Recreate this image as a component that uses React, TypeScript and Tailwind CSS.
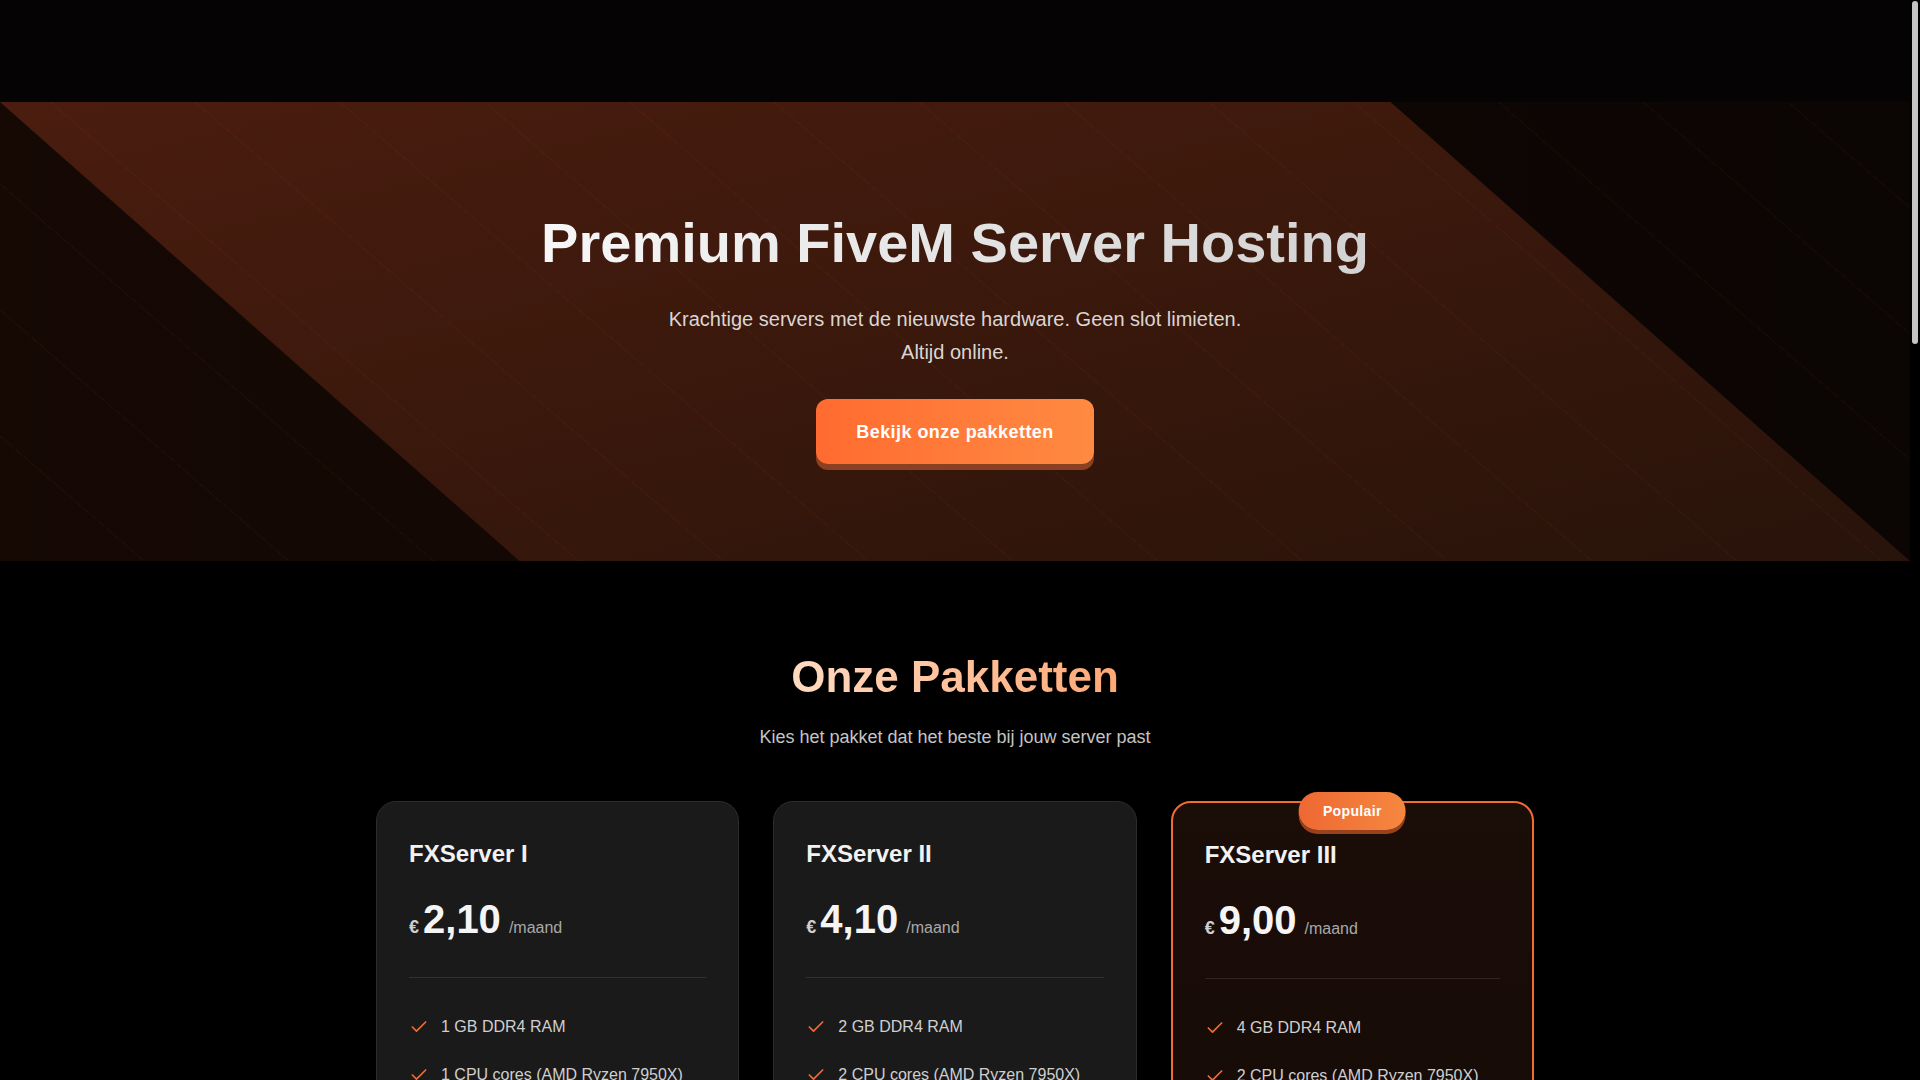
import React from 'react';
import { Check, Zap, Shield, Headphones, Cpu, HardDrive, Globe } from 'lucide-react';

type Pkg = {
  name: string;
  price: string;
  popular?: boolean;
  features: string[];
};

const packages: Pkg[] = [
  {
    name: 'FXServer I',
    price: '2,10',
    features: [
      '1 GB DDR4 RAM',
      '1 CPU cores (AMD Ryzen 7950X)',
      '10 GB NVMe SSD',
      'Geen slot limieten',
      'DDoS bescherming',
      'txAdmin inbegrepen',
      '24/7 support',
    ],
  },
  {
    name: 'FXServer II',
    price: '4,10',
    features: [
      '2 GB DDR4 RAM',
      '2 CPU cores (AMD Ryzen 7950X)',
      '25 GB NVMe SSD',
      'Geen slot limieten',
      'DDoS bescherming',
      'txAdmin inbegrepen',
      '24/7 support',
    ],
  },
  {
    name: 'FXServer III',
    price: '9,00',
    popular: true,
    features: [
      '4 GB DDR4 RAM',
      '2 CPU cores (AMD Ryzen 7950X)',
      '50 GB NVMe SSD',
      'Geen slot limieten',
      'DDoS bescherming',
      'txAdmin inbegrepen',
      '24/7 support',
    ],
  },
];

const reasons = [
  { icon: Zap, title: 'Razendsnel', text: 'De nieuwste AMD Ryzen processors voor de beste prestaties.' },
  { icon: Shield, title: 'DDoS bescherming', text: 'Je server blijft online, ook tijdens zware aanvallen.' },
  { icon: HardDrive, title: 'NVMe opslag', text: 'Snelle opslag voor korte laadtijden van je resources.' },
  { icon: Headphones, title: '24/7 support', text: 'Ons team staat dag en nacht voor je klaar.' },
];

const faqs = [
  { q: 'Hoe snel is mijn server online?', a: 'Direct na betaling wordt je server automatisch aangemaakt en is hij binnen enkele minuten bereikbaar.' },
  { q: 'Kan ik later upgraden?', a: 'Ja, je kunt op elk moment overstappen naar een groter pakket zonder dataverlies.' },
  { q: 'Zijn er slot limieten?', a: 'Nee, al onze pakketten hebben geen slot limieten. Je betaalt alleen voor de hardware.' },
  { q: 'Welke betaalmethoden accepteren jullie?', a: 'iDEAL, Bancontact, PayPal en creditcard.' },
];

const PackageCard: React.FC<{ pkg: Pkg }> = ({ pkg }) => {
  const popular = !!pkg.popular;
  return (
    <div
      className={`relative flex flex-col rounded-[20px] px-8 pt-9 pb-8 ${
        popular
          ? 'border-2 border-[#f26b33] bg-gradient-to-b from-[#1b0d08] to-[#130a07]'
          : 'border border-[#2c2c2c] bg-[#1a1a1a]'
      }`}
    >
      {popular && (
        <span className="absolute -top-[11px] left-1/2 -translate-x-1/2 rounded-full bg-gradient-to-r from-[#ee6833] to-[#f5873f] px-6 py-[9px] text-sm leading-5 font-bold tracking-wide text-white shadow-[0_4px_0_#99401d]">
          Populair
        </span>
      )}
      <h3 className="text-2xl leading-8 font-bold text-[#f2f2f2]">{pkg.name}</h3>
      <div className="mt-[29px] flex items-baseline leading-none">
        <span className="mr-1 text-lg font-bold text-[#cfcfcf]">€</span>
        <span className="text-[40px] font-bold text-[#f5f5f5]">{pkg.price}</span>
        <span className="ml-2 text-base text-[#a9a9a9]">/maand</span>
      </div>
      <div className="mt-[36px] h-px bg-white/10" />
      <ul className="mt-[37px] flex flex-col gap-6">
        {pkg.features.map((f) => (
          <li key={f} className="flex items-center gap-3 text-base leading-6 text-[#cfcfcf]">
            <Check size={20} strokeWidth={2} className="shrink-0 text-[#f26b33]" />
            {f}
          </li>
        ))}
      </ul>
      <button
        className={`mt-10 h-[52px] rounded-xl text-base font-bold tracking-wide ${
          popular
            ? 'bg-gradient-to-r from-[#ff6b30] to-[#ff8a42] text-white shadow-[0_5px_0_#8e3f20]'
            : 'border border-[#3a3a3a] bg-[#222] text-[#e5e5e5]'
        }`}
      >
        Bestel nu
      </button>
    </div>
  );
};

export default function App() {
  return (
    <div className="bg-black pr-[10px] font-['Liberation_Sans',Arial,sans-serif] text-white">
      {/* page scrollbar */}
      <div className="fixed top-0 right-0 z-50 h-screen w-[10px] bg-black">
        <div className="mt-px ml-[2px] h-[343px] w-[6px] rounded-full bg-[#c4c4c4]" />
      </div>

      {/* Header (empty bar) */}
      <header className="h-[102px] bg-[#050303]" />

      {/* Hero */}
      <section className="relative h-[459px] overflow-hidden bg-gradient-to-r from-[#160904] to-[#0b0503]">
        <div className="pointer-events-none absolute inset-0 bg-gradient-to-br from-[#4a1d0f] via-[#3a180c] to-[#28130a] [clip-path:polygon(0_0,72.8%_0,100%_100%,27.2%_100%)]" />
        <div className="pointer-events-none absolute inset-0 bg-[image:repeating-linear-gradient(41deg,transparent_0,transparent_94px,rgba(255,120,60,0.045)_94px,rgba(255,120,60,0.045)_95px)]" />
        <div className="relative flex flex-col items-center pt-[107px] text-center">
          <h1 className="bg-gradient-to-r from-[#f7f7f7] to-[#d2d2d2] bg-clip-text text-[56px] leading-[1.2] font-bold text-transparent">
            Premium FiveM Server Hosting
          </h1>
          <p className="mt-[27px] max-w-[600px] text-xl leading-relaxed text-[#dbd6d2]">
            Krachtige servers met de nieuwste hardware. Geen slot limieten. Altijd online.
          </p>
          <button className="mt-[31px] flex h-[65px] items-center rounded-xl bg-gradient-to-r from-[#ff6b30] to-[#ff8a42] px-10 text-lg font-bold tracking-wide text-white shadow-[0_6px_0_#8b4022]">
            Bekijk onze pakketten
          </button>
        </div>
      </section>

      {/* Packages */}
      <section className="flex flex-col items-center bg-black pt-[90px] pb-24">
        <h2 className="bg-gradient-to-r from-[#ffdac0] to-[#ffa874] bg-clip-text text-[44px] leading-[1.2] font-bold text-transparent">
          Onze Pakketten
        </h2>
        <p className="mt-[19px] text-lg leading-7 text-[#c4c4c4]">Kies het pakket dat het beste bij jouw server past</p>
        <div className="mt-[50px] grid w-[1158px] grid-cols-3 items-start gap-[34px]">
          {packages.map((p) => (
            <PackageCard key={p.name} pkg={p} />
          ))}
        </div>
      </section>

      {/* Why us */}
      <section className="flex flex-col items-center bg-[#0a0a0a] py-24">
        <h2 className="text-[40px] leading-[1.2] font-bold text-[#f2f2f2]">Waarom kiezen voor ons?</h2>
        <p className="mt-4 text-lg text-[#bfbfbf]">Alles wat je nodig hebt voor een succesvolle FiveM server</p>
        <div className="mt-14 grid w-[1158px] grid-cols-4 gap-6">
          {reasons.map(({ icon: Icon, title, text }) => (
            <div key={title} className="rounded-[20px] border border-[#2c2c2c] bg-[#161616] p-8">
              <div className="flex h-12 w-12 items-center justify-center rounded-xl bg-[#f26b33]/15 text-[#f26b33]">
                <Icon size={24} />
              </div>
              <h3 className="mt-6 text-xl font-bold text-[#f2f2f2]">{title}</h3>
              <p className="mt-3 text-base leading-relaxed text-[#a9a9a9]">{text}</p>
            </div>
          ))}
        </div>
        <div className="mt-16 flex w-[1158px] items-center justify-between rounded-[20px] border border-[#2c2c2c] bg-[#141414] px-12 py-10">
          <div className="flex items-center gap-5">
            <Cpu size={40} className="text-[#f26b33]" />
            <div>
              <div className="text-2xl font-bold text-[#f2f2f2]">AMD Ryzen 9 7950X</div>
              <div className="mt-1 text-base text-[#a9a9a9]">Tot 5,7 GHz boost clock op elke server</div>
            </div>
          </div>
          <div className="flex items-center gap-5">
            <Globe size={40} className="text-[#f26b33]" />
            <div>
              <div className="text-2xl font-bold text-[#f2f2f2]">Datacenter in Nederland</div>
              <div className="mt-1 text-base text-[#a9a9a9]">Lage ping voor spelers in de Benelux</div>
            </div>
          </div>
        </div>
      </section>

      {/* FAQ */}
      <section className="flex flex-col items-center bg-black py-24">
        <h2 className="text-[40px] leading-[1.2] font-bold text-[#f2f2f2]">Veelgestelde vragen</h2>
        <div className="mt-14 flex w-[800px] flex-col gap-4">
          {faqs.map((f) => (
            <div key={f.q} className="rounded-2xl border border-[#2c2c2c] bg-[#161616] px-8 py-6">
              <div className="text-lg font-bold text-[#f2f2f2]">{f.q}</div>
              <div className="mt-3 text-base leading-relaxed text-[#a9a9a9]">{f.a}</div>
            </div>
          ))}
        </div>
      </section>

      {/* Footer */}
      <footer className="border-t border-[#1f1f1f] bg-[#070707] py-16">
        <div className="mx-auto grid w-[1158px] grid-cols-4 gap-10">
          <div>
            <div className="text-xl font-bold text-[#f2f2f2]">FiveM Hosting</div>
            <p className="mt-4 text-sm leading-relaxed text-[#8f8f8f]">Premium FiveM server hosting met de nieuwste hardware.</p>
          </div>
          {[
            ['Pakketten', ['FXServer I', 'FXServer II', 'FXServer III']],
            ['Support', ['Contact', 'Discord', 'Status']],
            ['Juridisch', ['Algemene voorwaarden', 'Privacybeleid']],
          ].map(([title, links]) => (
            <div key={title as string}>
              <div className="text-base font-bold text-[#e5e5e5]">{title as string}</div>
              <ul className="mt-4 flex flex-col gap-3">
                {(links as string[]).map((l) => (
                  <li key={l} className="text-sm text-[#8f8f8f]">{l}</li>
                ))}
              </ul>
            </div>
          ))}
        </div>
        <div className="mx-auto mt-12 w-[1158px] border-t border-[#1f1f1f] pt-8 text-sm text-[#6f6f6f]">
          © 2025 FiveM Hosting. Alle rechten voorbehouden.
        </div>
      </footer>
    </div>
  );
}
